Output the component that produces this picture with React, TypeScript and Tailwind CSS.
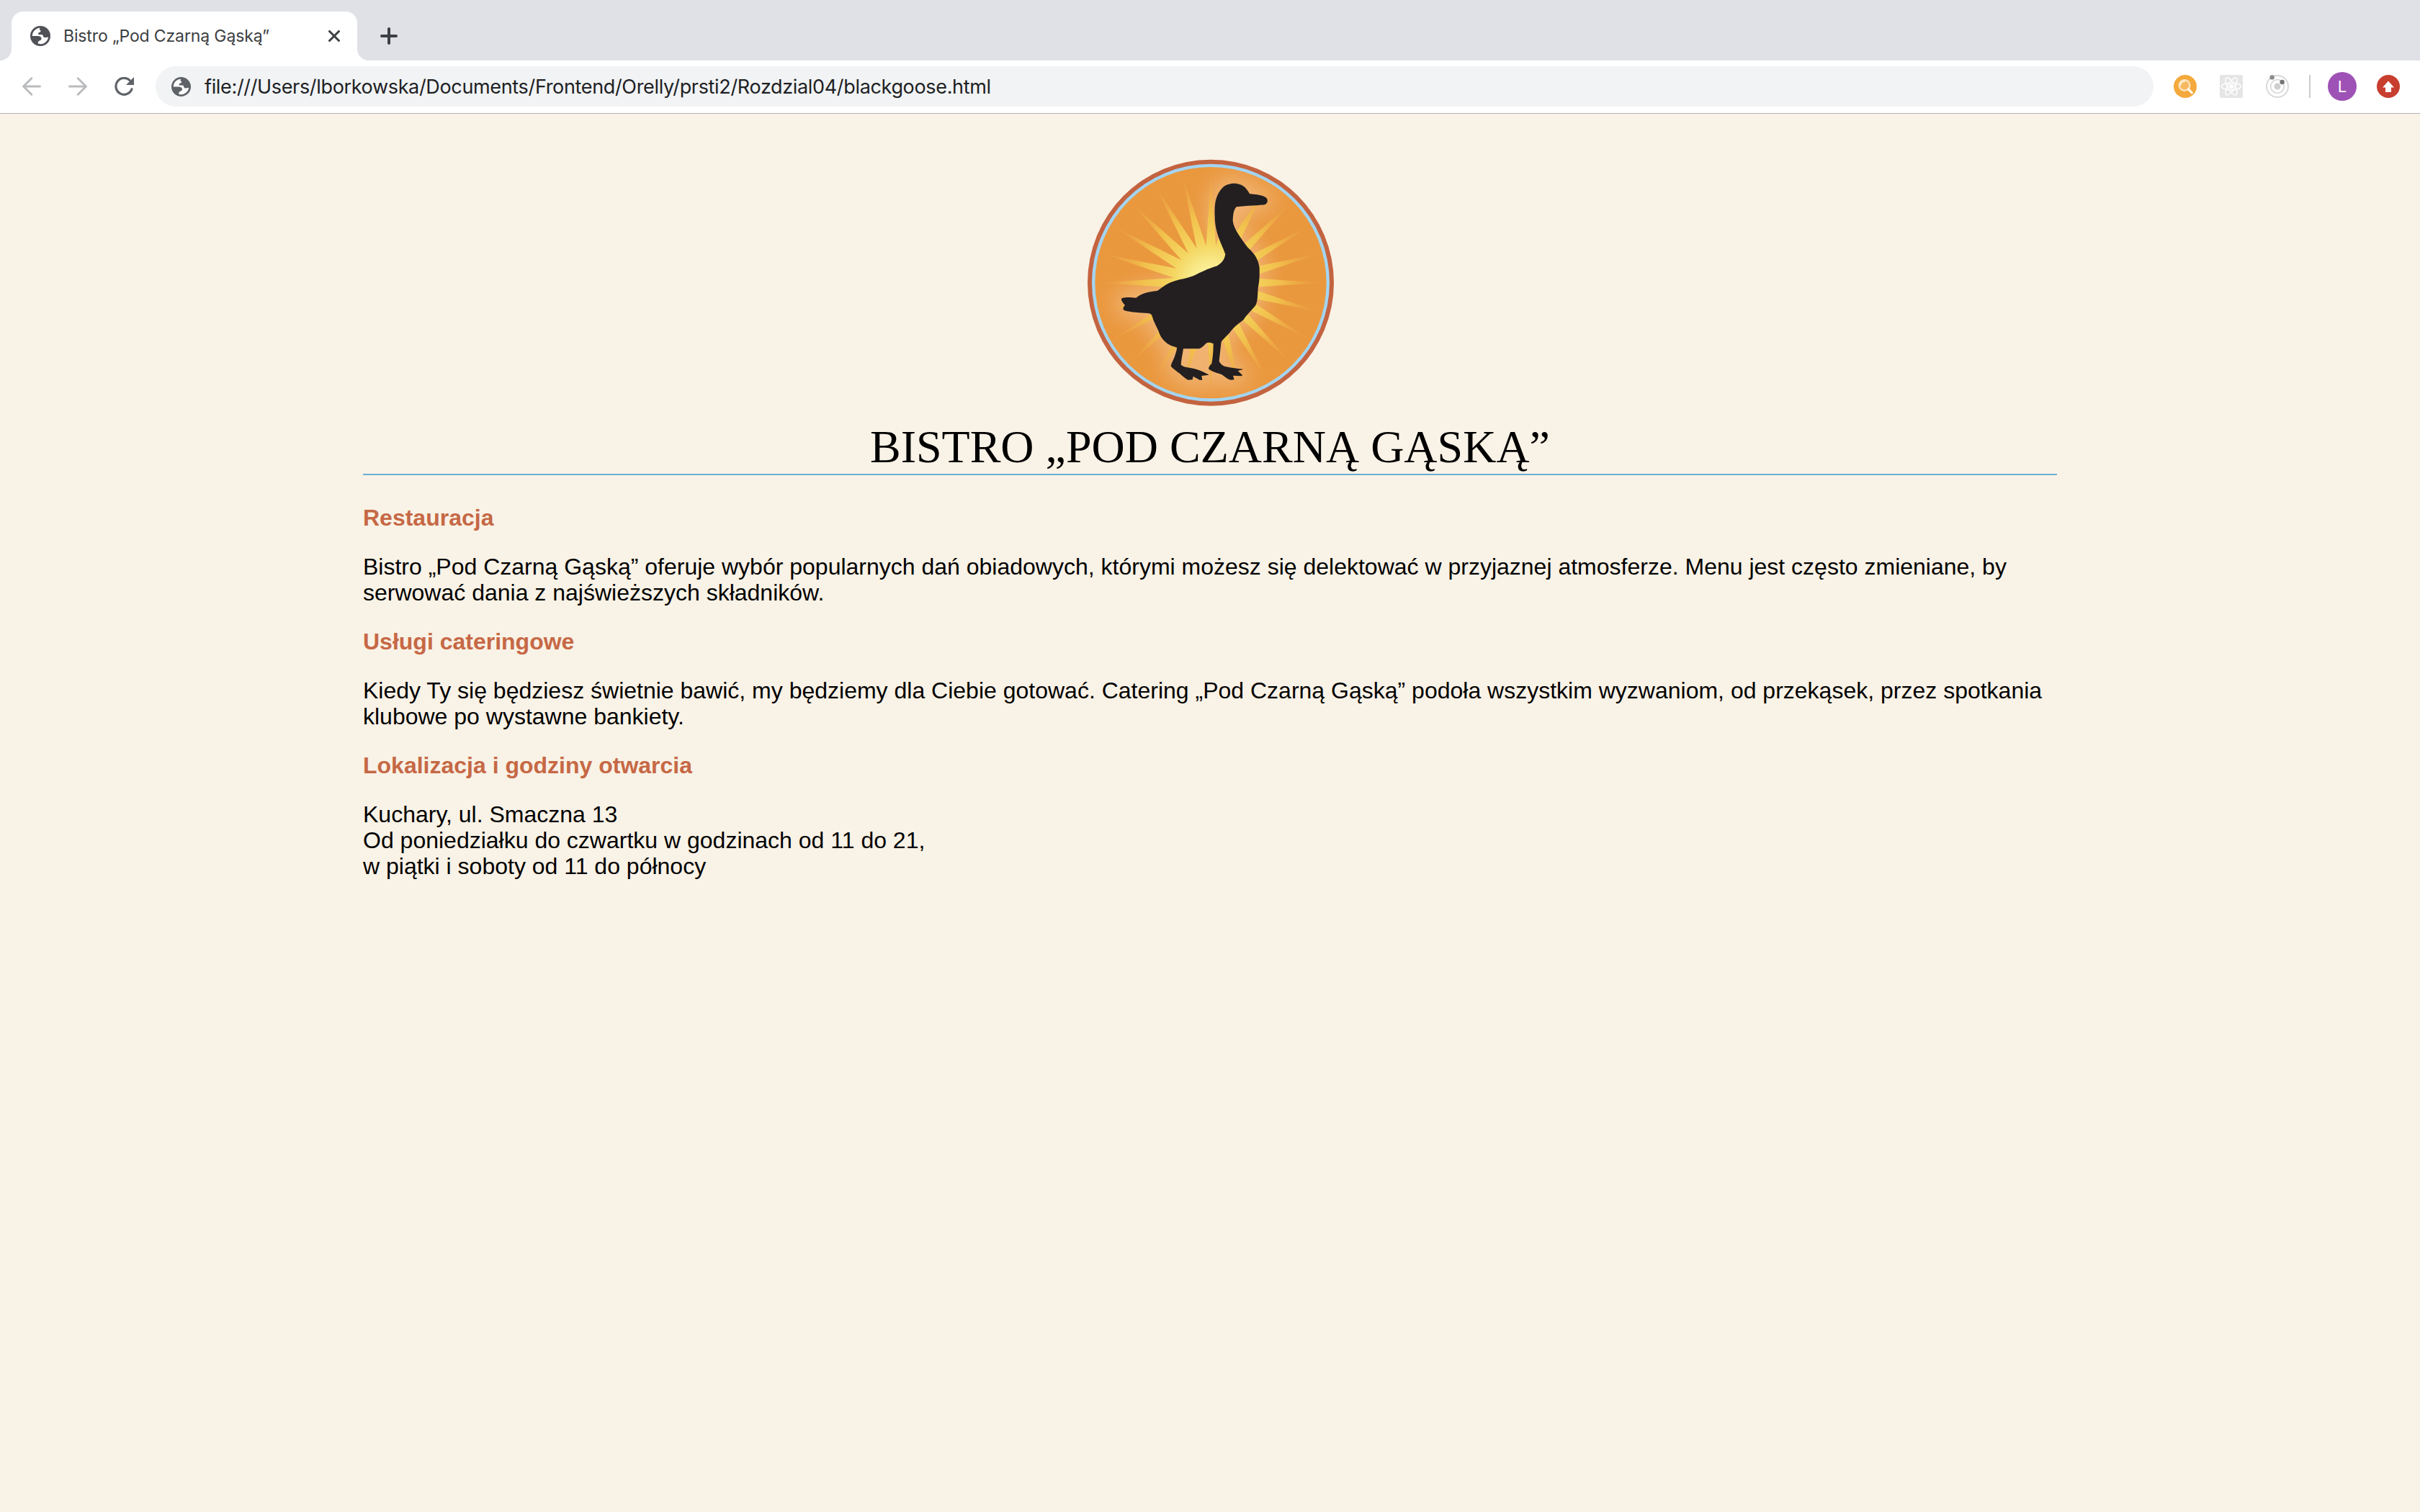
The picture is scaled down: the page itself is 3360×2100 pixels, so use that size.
const RAYS = Array.from({ length: 48 }, (_, i) => {
  const angle = (i * 7.5 * Math.PI) / 180;
  const radius = i % 2 === 0 ? 460 : 155;
  return `${(574 + radius * Math.cos(angle)).toFixed(1)},${(578 + radius * Math.sin(angle)).toFixed(1)}`;
}).join(" ");

const GOOSE =
  "M590 300C588 250 592 215 622 182C640 166 665 163 680 165C710 168 725 188 735 208C765 210 790 214 803 223C812 232 812 242 802 251C780 257 720 255 680 262C668 275 666 295 665 320C668 355 705 400 728 432C760 462 770 480 776 515C777 560 775 575 770 600C768 640 768 655 760 672C745 692 725 708 710 732C680 755 668 765 655 782C640 800 625 812 617 824C613 860 610 885 608 905C615 918 622 922 632 927C655 932 690 936 709 939L686 945L705 963L702 967L666 965L671 982L655 983C640 978 630 968 618 960C600 955 575 948 564 937C566 925 572 920 577 915C582 890 584 860 584 832C575 827 563 826 556 829C545 838 540 848 525 853L459 853C455 880 450 900 449 920C460 930 480 932 500 935C525 940 550 952 566 962L535 966L538 983L527 983L500 968L497 982L478 983C460 972 450 960 435 950C420 938 410 932 407 925C410 910 418 900 423 885C428 868 432 860 432 848C415 842 400 840 385 825C370 812 362 800 356 780C345 755 335 740 330 720C327 710 322 706 312 705C280 703 240 702 215 694C206 690 206 683 216 672C208 662 198 652 202 643C215 638 240 638 262 641C285 622 310 616 350 612C375 595 395 578 425 570C450 563 475 560 500 550C530 535 560 520 600 508C620 495 630 482 634 460C622 420 590 375 590 300Z";

function GooseLogo() {
  return (
    <svg className="block size-[346px]" viewBox="51 60 1038 1038" role="img">
      <defs>
        <radialGradient id="rays" gradientUnits="userSpaceOnUse" cx="574" cy="578" r="460">
          <stop offset="0" stopColor="#fdf6b0" />
          <stop offset="0.2" stopColor="#f8e887" />
          <stop offset="0.36" stopColor="#f4d55f" />
          <stop offset="0.62" stopColor="#f1c04c" />
          <stop offset="1" stopColor="#ec9f41" stopOpacity="0.3" />
        </radialGradient>
        <filter id="glow" x="-30%" y="-30%" width="160%" height="160%">
          <feGaussianBlur stdDeviation="46" />
        </filter>
        <clipPath id="disc">
          <circle cx="573" cy="578" r="483" />
        </clipPath>
      </defs>
      <circle cx="573" cy="578" r="513" fill="#c4633f" />
      <circle cx="573" cy="578" r="495" fill="#a3d5f2" />
      <circle cx="573" cy="578" r="482" fill="#ea983e" />
      <g clipPath="url(#disc)">
        <path d={GOOSE} fill="#f4c290" stroke="#f4c290" strokeWidth="50" opacity="0.75" filter="url(#glow)" />
      </g>
      <polygon points={RAYS} fill="url(#rays)" />
      <path d={GOOSE} fill="#231f20" />
    </svg>
  );
}

function Globe({ className }: { className: string }) {
  return (
    <svg className={className} viewBox="0 0 28 28">
      <circle cx="14" cy="14" r="14" fill="currentColor" />
      <path
        fill="#fff"
        d="M2.8 14C2.8 8 7.5 3.2 13.6 2.8L12.8 5.2L14.5 6.6C14.8 8.2 13.6 9 12.2 9.2C10.5 9.5 10.6 11.6 12 12L16 12C17.6 12.2 17.8 13.6 18.2 15C19.2 16.6 21.5 16.2 25.1 15.4C24.4 20.6 20 25 14.2 25.2C12.2 25.2 11 24.8 10.6 24C10.8 22 11.6 20.4 13.6 20.2C15.6 19.6 15.8 17.6 15.2 16.2C14 14.2 11.5 13.9 9 14Z"
      />
    </svg>
  );
}

function TabStrip() {
  return (
    <div className="flex h-[84px] bg-[#dfe1e6]">
      <div className="flex w-4 items-end bg-white">
        <div className="h-full w-4 rounded-br-2xl bg-[#dfe1e6]" />
      </div>
      <div className="bg-[#dfe1e6] pt-4">
        <div className="flex h-[68px] w-[480px] items-center rounded-t-2xl bg-white pl-[26px] pr-6">
          <Globe className="size-7 text-[#505157]" />
          <span className="ml-[18px] whitespace-nowrap text-[23px] leading-7 tracking-[-0.13px] text-[#3c4043]">
            Bistro „Pod Czarną Gąską”
          </span>
          <svg className="ml-auto size-4" viewBox="0 0 16 16" stroke="#3c4043" strokeWidth="3" strokeLinecap="round">
            <path d="M1.5 1.5l13 13M14.5 1.5l-13 13" />
          </svg>
        </div>
      </div>
      <div className="bg-white">
        <div className="flex h-full items-center rounded-bl-2xl bg-[#dfe1e6] pl-8 pt-4">
          <svg className="size-6" viewBox="0 0 24 24" stroke="#3c4043" strokeWidth="4" strokeLinecap="round">
            <path d="M12 2v20M2 12h20" />
          </svg>
        </div>
      </div>
    </div>
  );
}

function Toolbar() {
  return (
    <div className="flex h-[74px] items-center border-b border-[#b1b1b5] bg-white pb-px pl-[31px] pr-7">
      <svg className="h-[26px] w-[26px]" viewBox="0 0 26 26" fill="none" stroke="#babcbe" strokeWidth="3" strokeLinecap="round" strokeLinejoin="round">
        <path d="M24.5 13H2M12.8 1.8L1.6 13l11.2 11.2" />
      </svg>
      <svg className="ml-[38px] h-[26px] w-[26px]" viewBox="0 0 26 26" fill="none" stroke="#babcbe" strokeWidth="3" strokeLinecap="round" strokeLinejoin="round">
        <path d="M1.5 13H24M13.2 1.8L24.4 13L13.2 24.2" />
      </svg>
      <svg className="ml-[38px] h-[26px] w-[27px]" viewBox="0 0 27 26" fill="none">
        <path d="M21.6 5A11.4 11.4 0 1 0 24 16.8" stroke="#5f6368" strokeWidth="3.2" strokeLinecap="round" />
        <path d="M27 0v11H16z" fill="#5f6368" />
      </svg>
      <div className="ml-[30px] flex h-14 w-[2774px] items-center rounded-full bg-[#f1f3f4] pl-[22px]">
        <Globe className="size-[27px] text-[#5f6368]" />
        <span className="ml-[19px] whitespace-nowrap pt-px text-[27px] leading-8 tracking-[-0.34px] text-[#202124]">
          file:///Users/lborkowska/Documents/Frontend/Orelly/prsti2/Rozdzial04/blackgoose.html
        </span>
      </div>
      <div className="ml-7 flex items-center">
        <svg className="size-8" viewBox="0 0 32 32" fill="none">
          <circle cx="16" cy="16" r="16" fill="#f4a93c" />
          <circle cx="15" cy="14.5" r="7.3" fill="#f6b95f" stroke="#fbe3bd" strokeWidth="2.4" />
          <path d="M9.5 14A5.5 5.5 0 0 1 15 9" stroke="#fdf0da" strokeWidth="2" strokeLinecap="round" />
          <path d="M20.5 20l4.8 4.8" stroke="#fff8ec" strokeWidth="3.2" strokeLinecap="round" />
        </svg>
        <svg className="ml-8 size-8" viewBox="0 0 32 32" fill="none" stroke="#fff" strokeWidth="1.5">
          <rect width="32" height="32" rx="2" fill="#e5e5e5" stroke="none" />
          <ellipse cx="16" cy="16" rx="13.5" ry="5" />
          <ellipse cx="16" cy="16" rx="13.5" ry="5" transform="rotate(60 16 16)" />
          <ellipse cx="16" cy="16" rx="13.5" ry="5" transform="rotate(120 16 16)" />
          <circle cx="16" cy="16" r="2.4" fill="#fff" />
        </svg>
        <svg className="ml-8 size-8" viewBox="0 0 32 32" fill="none">
          <circle cx="16" cy="16" r="15" stroke="#d6d6d6" strokeWidth="1.8" />
          <circle cx="16" cy="16" r="9.3" stroke="#d9d9d9" strokeWidth="1.8" />
          <circle cx="16" cy="16" r="4.6" fill="#cfcfcf" />
          <circle cx="8.6" cy="3.4" r="3.2" fill="#8b8b8b" />
          <circle cx="22.6" cy="10" r="3.2" fill="#757575" />
        </svg>
        <div className="ml-7 h-8 w-0.5 bg-[#cacbcd]" />
        <div className="ml-6 flex size-10 items-center justify-center rounded-full bg-[#9f52b6] text-[22px] leading-none text-white">
          L
        </div>
        <svg className="ml-7 size-8" viewBox="0 0 32 32">
          <circle cx="16" cy="16" r="16" fill="#c83e2f" />
          <path d="M16 8.4L24 17.6H20V24H12V17.6H8z" fill="#fff" />
        </svg>
      </div>
    </div>
  );
}

function SectionTitle({ children }: { children: string }) {
  return <h2 className="font-bold text-[#c66845]">{children}</h2>;
}

export default function App() {
  return (
    <div className="flex h-[2100px] w-[3360px] flex-col overflow-hidden bg-[#f9f2e6]">
      <header className="font-[Inter,sans-serif]">
        <TabStrip />
        <Toolbar />
      </header>
      <main className="mx-auto w-[2352px] pt-[62px]">
        <div className="flex flex-col items-center border-b-2 border-[#6baed6]">
          <GooseLogo />
          <h1 className="mt-[18px] whitespace-nowrap font-['Liberation_Serif',serif] text-[64px] leading-[74px] text-black">
            BISTRO „POD CZARNĄ GĄSKĄ”
          </h1>
        </div>
        <div className="mt-[41px] flex flex-col gap-8 whitespace-nowrap font-['Liberation_Sans',sans-serif] text-[32px] leading-9 text-black">
          <SectionTitle>Restauracja</SectionTitle>
          <p>
            Bistro „Pod Czarną Gąską” oferuje wybór popularnych dań obiadowych, którymi możesz się delektować w przyjaznej atmosferze. Menu jest często zmieniane, by
            <br />
            serwować dania z najświeższych składników.
          </p>
          <SectionTitle>Usługi cateringowe</SectionTitle>
          <p>
            Kiedy Ty się będziesz świetnie bawić, my będziemy dla Ciebie gotować. Catering „Pod Czarną Gąską” podoła wszystkim wyzwaniom, od przekąsek, przez spotkania
            <br />
            klubowe po wystawne bankiety.
          </p>
          <SectionTitle>Lokalizacja i godziny otwarcia</SectionTitle>
          <p>
            Kuchary, ul. Smaczna 13
            <br />
            Od poniedziałku do czwartku w godzinach od 11 do 21,
            <br />w piątki i soboty od 11 do północy
          </p>
        </div>
      </main>
    </div>
  );
}
